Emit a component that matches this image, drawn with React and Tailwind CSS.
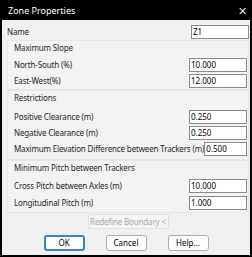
import React from "react";

const font = { fontFamily: '"Noto Sans", "Liberation Sans", sans-serif' };

const Field = ({ value }) => (
  <div className="w-[58px] h-[14px] bg-white border border-[#8a8a8a] flex items-center pl-[1px] text-[8px] text-black leading-none">
    {value}
  </div>
);

const Row = ({ label, value, h = "h-[16px]" }) => (
  <div className={`flex items-center justify-between ${h} pl-[6px] pr-[1px]`}>
    <span className="text-[8px] tracking-[-0.15px] text-[#262626] leading-none whitespace-nowrap">{label}</span>
    <Field value={value} />
  </div>
);

const Group = ({ title, children, className = "" }) => (
  <div className={`ml-[5px] w-[242px] border border-[#e6e6e6] bg-[#f3f3f3] ${className}`}>
    <div className="h-[12px] mt-[1px] pl-[6px] flex items-center text-[8px] tracking-[-0.15px] text-[#262626] leading-none">{title}</div>
    {children}
  </div>
);

export default function App() {
  return (
    <div className="w-[252px] h-[257px] bg-black flex flex-col" style={font}>
      {/* Title bar */}
      <div className="h-[20px] flex items-center justify-between pl-[8px] pr-[5px] text-white">
        <span className="text-[9px] leading-none">Zone Properties</span>
        <span className="text-[11px] leading-none text-[#e0e0e0]">✕</span>
      </div>

      <div className="flex-1 mx-[2px] mb-[2px] bg-[#f0f0f0] flex flex-col">
        {/* Name */}
        <div className="mt-[5px] h-[14px] flex items-center justify-between pl-[5px] pr-[1px]">
          <span className="text-[8px] tracking-[-0.15px] text-[#262626] leading-none">Name</span>
          <Field value="Z1" />
        </div>

        <Group title="Maximum Slope" className="mt-[1px] h-[50px]">
          <div className="h-[3px]" />
          <Row label="North-South (%)" value="10.000" />
          <Row label="East-West(%)" value="12.000" />
        </Group>

        <Group title="Restrictions" className="h-[70px]">
          <div className="h-[5px]" />
          <Row label="Positive Clearance (m)" value="0.250" />
          <Row label="Negative Clearance (m)" value="0.250" />
          <Row label="Maximum Elevation Difference between Trackers (m)" value="0.500" />
        </Group>

        <Group title="Minimum Pitch between Trackers" className="h-[53px]">
          <div className="h-[3px]" />
          <Row label="Cross Pitch between Axles (m)" value="10.000" h="h-[17px]" />
          <Row label="Longitudinal Pitch (m)" value="1.000" h="h-[17px]" />
        </Group>

        {/* Redefine */}
        <div className="mt-[1px] flex justify-center">
          <div className="ml-[4px] w-[81px] h-[15px] border border-[#e0e0e0] bg-[#f4f4f4] flex items-center justify-center text-[8px] tracking-[-0.15px] text-[#a8a8a8] leading-none">
            Redefine Boundary &lt;
          </div>
        </div>

        {/* Buttons */}
        <div className="mt-[6px] flex justify-center gap-[21px]">
          <div className="w-[41px] h-[16px] border-2 border-[#3a7fd0] rounded-[3px] bg-[#fdfdfd] flex items-center justify-center text-[8px] text-black leading-none">
            OK
          </div>
          <div className="w-[41px] h-[16px] border border-[#adadad] rounded-[3px] bg-[#fdfdfd] flex items-center justify-center text-[8px] text-black leading-none">
            Cancel
          </div>
          <div className="w-[41px] h-[16px] border border-[#adadad] rounded-[3px] bg-[#fdfdfd] flex items-center justify-center text-[8px] text-black leading-none">
            Help...
          </div>
        </div>
      </div>
    </div>
  );
}
